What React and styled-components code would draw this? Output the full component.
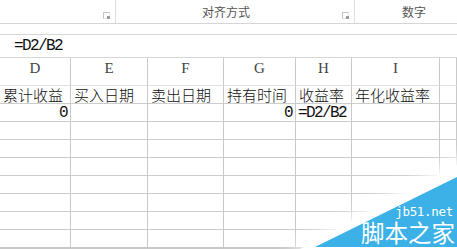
import React from 'react'
import styled, { createGlobalStyle } from 'styled-components'

const GlobalStyle = createGlobalStyle`
  html, body {
    margin: 0;
    padding: 0;
    background: #fff;
    overflow: hidden;
  }
`

const Page = styled.div`
  position: relative;
  width: 457px;
  height: 249px;
  overflow: hidden;
  background: #fff;
  font-family: "Noto Sans CJK SC", sans-serif;
`

const Ribbon = styled.div`
  display: flex;
  height: 23px;
  border-bottom: 1px solid #d6d6d6;
`

const RibbonGroup = styled.div`
  position: relative;
  width: ${props => props.width ? `${props.width}px` : 'auto'};
  flex: ${props => props.width ? 'none' : '1'};
  border-right: ${props => props.last ? 'none' : '1px solid #dedede'};
  display: flex;
  align-items: center;
  padding-left: ${props => props.labelOffset || 0}px;
  box-sizing: border-box;
`

const GroupLabel = styled.span`
  font-size: 12px;
  color: #555;
  line-height: 1;
`

const Launcher = styled.div`
  position: absolute;
  right: 5px;
  top: 12px;
  width: 5px;
  height: 5px;
  border: 1px solid #c4c4c4;
  border-right-color: #e8e8e8;
  border-bottom-color: #e8e8e8;

  &::after {
    content: '';
    position: absolute;
    right: -1px;
    bottom: -1px;
    width: 3px;
    height: 3px;
    background: #9a9a9a;
  }
`

const Spacer = styled.div`
  height: 10px;
`

const FormulaBar = styled.div`
  height: 22px;
  border-top: 1px solid #d6d6d6;
  border-bottom: 1px solid #d6d6d6;
  display: flex;
  align-items: center;
  padding-left: 14px;
`

const Formula = styled.span`
  font-family: "Liberation Mono", monospace;
  font-size: 16px;
  letter-spacing: -1.6px;
  color: #111;
`

const Sheet = styled.div`
  display: grid;
  grid-template-columns: 71px 77px 76px 72px 56px 88px 1fr;
`

const ColHead = styled.div`
  height: 21px;
  padding-bottom: 6px;
  border-right: 1px solid #c9c9c9;
  border-bottom: 1px solid #e2e2e2;
  display: flex;
  align-items: center;
  justify-content: center;
  font-family: "Liberation Serif", serif;
  font-size: 15px;
  color: #444;
`

const Cell = styled.div`
  height: 17px;
  border-right: 1px solid #c9c9c9;
  border-bottom: 1px solid #cdcdcd;
  display: flex;
  align-items: center;
  justify-content: ${props => props.right ? 'flex-end' : 'flex-start'};
  padding: 0 ${props => props.right ? 3 : 0}px 0 ${props => props.mono ? 2 : 3}px;
  font-size: 15px;
  font-weight: 300;
  color: #111;
  white-space: nowrap;
  line-height: 1;
`

const NumberText = styled.span`
  font-family: "Liberation Mono", monospace;
  font-size: 16px;
  font-weight: 400;
  letter-spacing: -1.6px;
  padding-top: 1px;
`

const BottomBar = styled.div`
  position: absolute;
  left: 0;
  right: 0;
  bottom: 0;
  height: 2px;
  background: #c8c8c8;
`

const Watermark = styled.svg`
  position: absolute;
  left: 0;
  top: 0;
  width: 457px;
  height: 249px;
  pointer-events: none;
`

const MarkSite = styled.div`
  position: absolute;
  right: 4px;
  top: 205px;
  height: 13px;
  font-family: "DejaVu Sans Mono", monospace;
  font-size: 12.5px;
  line-height: 13px;
  color: #fff;
  letter-spacing: -0.3px;
`

const MarkName = styled.div`
  position: absolute;
  right: 2px;
  top: 220px;
  height: 24px;
  font-family: "Noto Sans CJK SC", sans-serif;
  font-size: 23.5px;
  line-height: 24px;
  color: #fff;
`

const columns = ['D', 'E', 'F', 'G', 'H', 'I', '']

const rows = [
  [{ text: '累计收益' }, { text: '买入日期' }, { text: '卖出日期' }, { text: '持有时间' }, { text: '收益率' }, { text: '年化收益率' }, {}],
  [{ text: '0', right: true, mono: true }, {}, {}, { text: '0', right: true, mono: true }, { text: '=D2/B2', mono: true }, {}, {}],
  ...Array.from({ length: 7 }, () => columns.map(() => ({})))
]

export default function App() {
  return (
    <Page>
      <GlobalStyle />
      <Ribbon>
        <RibbonGroup width={116}>
          <Launcher />
        </RibbonGroup>
        <RibbonGroup width={239} labelOffset={86}>
          <GroupLabel>对齐方式</GroupLabel>
          <Launcher />
        </RibbonGroup>
        <RibbonGroup last labelOffset={47}>
          <GroupLabel>数字</GroupLabel>
        </RibbonGroup>
      </Ribbon>
      <Spacer />
      <FormulaBar>
        <Formula>=D2/B2</Formula>
      </FormulaBar>
      <Sheet>
        {columns.map((c, i) => <ColHead key={i}>{c}</ColHead>)}
        {rows.map((row, r) => row.map((cell, i) => (
          <Cell key={`${r}-${i}`} right={cell.right} mono={cell.mono}>
            {cell.mono ? <NumberText>{cell.text}</NumberText> : cell.text}
          </Cell>
        )))}
      </Sheet>
      <BottomBar />
      <Watermark viewBox="0 0 457 249">
        <defs>
          <filter id="glow" x="-20%" y="-20%" width="140%" height="140%">
            <feGaussianBlur stdDeviation="7" />
          </filter>
        </defs>
        <polygon points="285,252 470,150 470,252" fill="#fff" filter="url(#glow)" />
        <polygon points="300,249 457,165 457,249" fill="#fff" />
        <polygon points="315,247 457,177 457,247" fill="#3cb1e8" />
      </Watermark>
      <MarkSite>jb51.net</MarkSite>
      <MarkName>脚本之家</MarkName>
    </Page>
  )
}
